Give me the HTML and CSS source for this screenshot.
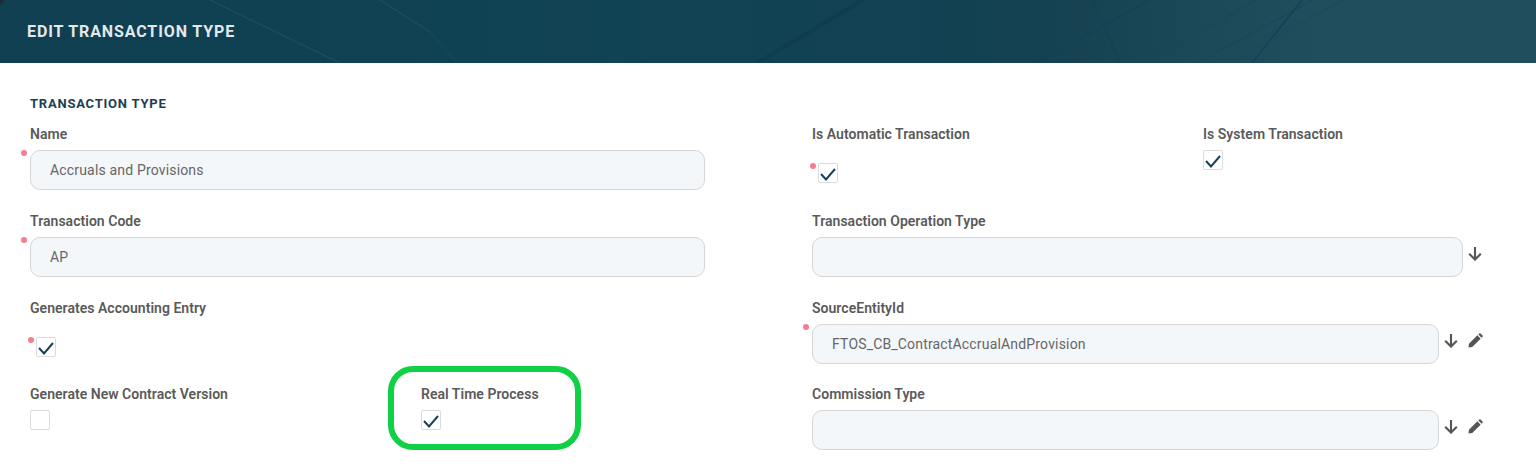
FILE: index.html
```html
<!DOCTYPE html>
<html lang="en">
<head>
<meta charset="utf-8">
<title>Edit Transaction Type</title>
<link rel="stylesheet" href="styles.css">
</head>
<body>
<header class="banner">
  <svg class="banner-art" viewBox="0 0 1536 63" preserveAspectRatio="none" aria-hidden="true">
    <g fill="none">
      <path class="ln-light" d="M210 0L340 63"/>
      <path class="ln-light" d="M380 0L430 32"/>
      <path class="ln-faint" d="M430 32L457 63"/>
      <path class="ln-band" d="M863 0L757 63"/>
      <path class="ln-dark" d="M1093 0L1120 63"/>
      <path class="ln-dark" d="M1150 0L1037 63"/>
      <path class="ln-mid" d="M1257 0L1142 63"/>
      <path class="ln-mid" d="M1313 0L1197 63"/>
      <path class="ln-dark" d="M1302 0L1252 63"/>
      <path class="ln-faint" d="M1343 0L1230 63"/>
    </g>
  </svg>
  <h1 class="banner-title">EDIT TRANSACTION TYPE</h1>
</header>
<main class="content">
  <h2 class="section-title">TRANSACTION TYPE</h2>
  <div class="form">
    <div class="col">
      <div class="field">
        <label class="label">Name</label>
        <div class="control required"><div class="input input-left">Accruals and Provisions</div></div>
      </div>
      <div class="field">
        <label class="label">Transaction Code</label>
        <div class="control required"><div class="input input-left">AP</div></div>
      </div>
      <div class="field">
        <label class="label">Generates Accounting Entry</label>
        <div class="control required check-offset">
          <span class="check"><svg viewBox="0 0 18 18"><path d="M2 10L7 15.5L16 5"/></svg></span>
        </div>
      </div>
      <div class="pair last">
        <div class="field">
          <label class="label">Generate New Contract Version</label>
          <span class="check"></span>
        </div>
        <div class="field highlighted">
          <label class="label">Real Time Process</label>
          <span class="check"><svg viewBox="0 0 18 18"><path d="M2 10L7 15.5L16 5"/></svg></span>
          <span class="ring"></span>
        </div>
      </div>
    </div>
    <div class="col">
      <div class="pair">
        <div class="field">
          <label class="label">Is Automatic Transaction</label>
          <div class="control required check-offset">
            <span class="check"><svg viewBox="0 0 18 18"><path d="M2 10L7 15.5L16 5"/></svg></span>
          </div>
        </div>
        <div class="field">
          <label class="label">Is System Transaction</label>
          <span class="check"><svg viewBox="0 0 18 18"><path d="M2 10L7 15.5L16 5"/></svg></span>
        </div>
      </div>
      <div class="field">
        <label class="label">Transaction Operation Type</label>
        <div class="control">
          <div class="input input-arrow"></div>
          <svg class="icon arrow" viewBox="0 0 14 14"><path d="M7 0V12.5M1.2 6.8L7 12.6L12.8 6.8"/></svg>
        </div>
      </div>
      <div class="field">
        <label class="label">SourceEntityId</label>
        <div class="control required">
          <div class="input input-both">FTOS_CB_ContractAccrualAndProvision</div>
          <svg class="icon arrow" viewBox="0 0 14 14"><path d="M7 0V12.5M1.2 6.8L7 12.6L12.8 6.8"/></svg>
          <svg class="icon pencil" viewBox="0 0 16 16"><path d="M0.5 15.5L1 11.5L10 2.5L13.5 6L4.5 15ZM11 1.5L12 0.5Q12.7 0 13.4 0.5L15.5 2.6Q16 3.3 15.5 4L14.5 5Z"/></svg>
        </div>
      </div>
      <div class="field last">
        <label class="label">Commission Type</label>
        <div class="control">
          <div class="input input-both"></div>
          <svg class="icon arrow" viewBox="0 0 14 14"><path d="M7 0V12.5M1.2 6.8L7 12.6L12.8 6.8"/></svg>
          <svg class="icon pencil" viewBox="0 0 16 16"><path d="M0.5 15.5L1 11.5L10 2.5L13.5 6L4.5 15ZM11 1.5L12 0.5Q12.7 0 13.4 0.5L15.5 2.6Q16 3.3 15.5 4L14.5 5Z"/></svg>
        </div>
      </div>
    </div>
  </div>
</main>
</body>
</html>
```
FILE: styles.css
```css
* { box-sizing: border-box; }
html, body { margin: 0; padding: 0; background: #fff; overflow: hidden; }
body { font-family: Roboto, "Liberation Sans", sans-serif; height: 473px; }

.banner {
  position: relative;
  height: 63px;
  display: flex;
  align-items: center;
  padding-left: 27px;
  background:
    radial-gradient(circle at 0 0, #1c2c33 0, #1c2c33 3px, transparent 5px),
    linear-gradient(90deg, #0f3f50 0%, #104354 40%, #124152 62%, #164252 70%, #1c4958 78%, #204e5d 86%, #214e5d 100%);
  overflow: hidden;
}
.banner-art { position: absolute; inset: 0; width: 100%; height: 100%; }
.ln-light { stroke: #185064; stroke-width: 1.1; }
.ln-faint { stroke: #1a4b5b; stroke-width: 1; }
.ln-band { stroke: #103d4c; stroke-width: 4; }
.ln-dark { stroke: #154253; stroke-width: 1.4; }
.ln-mid { stroke: #18475a; stroke-width: 1; }
.banner-title {
  position: relative;
  margin: 0;
  font-size: 16px;
  font-weight: 700;
  letter-spacing: 0.88px;
  color: #e4e8ea;
}

.content { padding: 33px 0 0 30px; }
.section-title {
  margin: 0;
  height: 15px;
  line-height: 15px;
  font-size: 13px;
  font-weight: 700;
  letter-spacing: 0.78px;
  color: #1a3f52;
}
.form { display: flex; margin-top: 13px; }
.col { width: 782px; flex: none; }
.col + .col { width: 700px; }
.field { position: relative; min-height: 66px; margin-bottom: 21px; }
.field.last, .pair.last .field { margin-bottom: 0; }
.field.last { margin-top: -1px; }
.pair { display: flex; }
.pair > .field { width: 391px; flex: none; }
.pair.last { margin-top: -1px; }
.label {
  display: block;
  height: 20px;
  margin-bottom: 6px;
  line-height: 20px;
  font-size: 14px;
  font-weight: 600;
  letter-spacing: 0.03px;
  color: #5a5a5a;
}
.control { position: relative; display: flex; min-height: 40px; }
.required::before {
  content: "";
  position: absolute;
  left: -9px;
  top: 0;
  width: 6px;
  height: 6px;
  border-radius: 50%;
  background: #fb7b8c;
}
.input {
  height: 40px;
  padding: 0 19px;
  line-height: 38px;
  font-size: 14px;
  letter-spacing: 0.17px;
  color: #666;
  background: #f4f7fa;
  border: 1px solid #d6d6d6;
  border-radius: 10px;
  flex: none;
}
.input-left { width: 675px; }
.input-arrow { width: 651px; }
.input-both { width: 627px; }
.check {
  display: block;
  width: 20px;
  height: 20px;
  background: #fff;
  border: 1px solid #dcdcdc;
  border-radius: 2px;
}
.check svg { display: block; width: 18px; height: 18px; fill: none; stroke: #17405a; stroke-width: 2; }
.check-offset { padding: 13px 0 0 6px; }
.check-offset.required::before { left: -2px; top: 13px; }
.icon { flex: none; }
.arrow {
  width: 14px;
  height: 14px;
  margin: 10px 0 0 5px;
  fill: none;
  stroke: #555;
  stroke-width: 2.1;
}
.pencil { width: 15px; height: 15px; margin: 9px 0 0 10px; fill: #555; }
.ring {
  position: absolute;
  left: -33px;
  top: -18px;
  width: 193px;
  height: 84px;
  border: 6px solid #10d045;
  border-radius: 25px;
  pointer-events: none;
}
```
